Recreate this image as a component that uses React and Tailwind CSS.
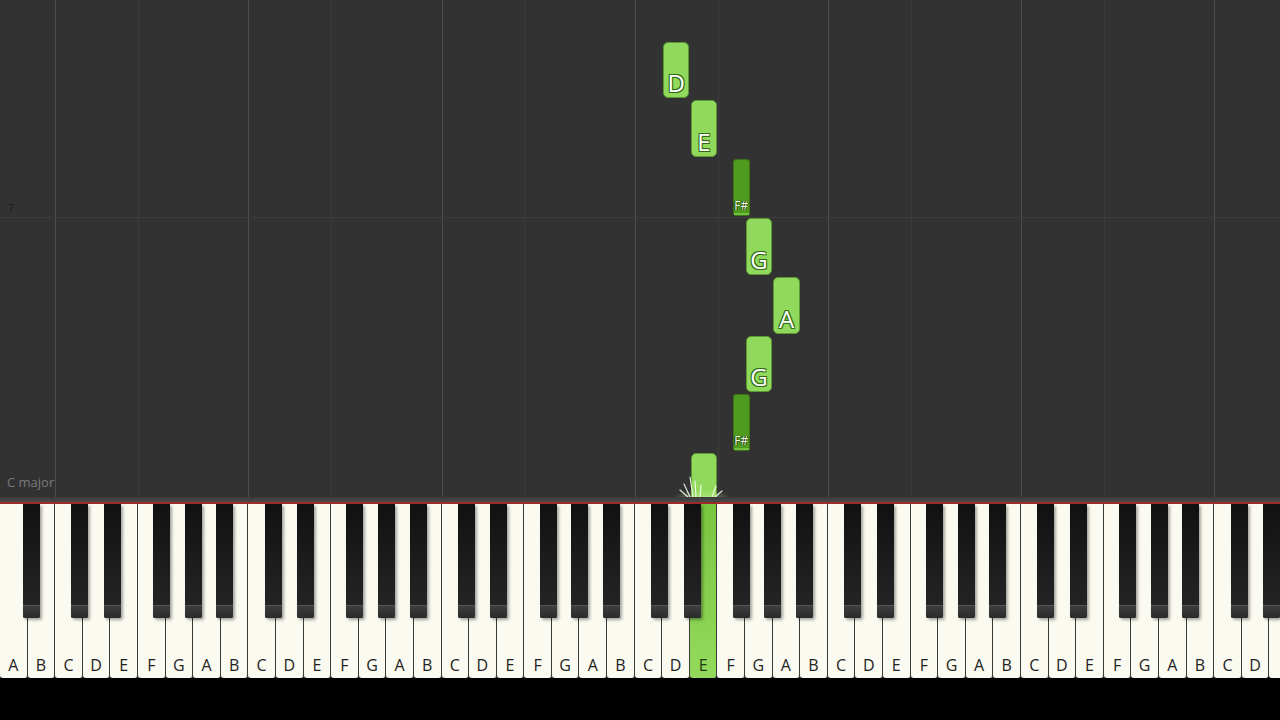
import React from 'react';

const KEY_W = 27.6;
const WHITE_COUNT = 47;
const NAMES = 'ABCDEFG';
const LIT_KEY = 25;

// black key sits after these white keys (index within octave starting on A), shifted a bit like a real keyboard
const BLACK_SHIFT = { 0: 4, 2: -3, 3: 2, 5: -4, 6: 0 };

const notes = [
  { key: 24, top: 42, h: 56, label: 'D' },
  { key: 25, top: 100, h: 57, label: 'E' },
  { key: 26, top: 159, h: 57, label: 'F#', sharp: true },
  { key: 27, top: 218, h: 57, label: 'G' },
  { key: 28, top: 277, h: 57, label: 'A' },
  { key: 27, top: 336, h: 56, label: 'G' },
  { key: 26, top: 394, h: 57, label: 'F#', sharp: true },
  { key: 25, top: 453, h: 48, label: '' },
];

const gridLines = [];
for (let i = 0; i < WHITE_COUNT; i++) {
  const n = i % 7;
  if (n === 2) gridLines.push({ x: i * KEY_W, major: true });
  if (n === 5) gridLines.push({ x: i * KEY_W, major: false });
}

const Note = ({ note }) => {
  if (note.sharp) {
    const center = (note.key + 1) * KEY_W + BLACK_SHIFT[5];
    return (
      <div
        className="absolute flex flex-col justify-end items-center rounded-[3px] border border-[#3d7417] bg-[#4f9b1f]"
        style={{ left: center - 8.5, top: note.top, width: 17, height: note.h }}
      >
        <span className="mb-[1px] text-[12px] leading-none text-[#eef6e6] font-['Open_Sans',sans-serif] [text-shadow:0_0_1px_#1f3d0b,1px_0_0_#1f3d0b,-1px_0_0_#1f3d0b]">
          {note.label}
        </span>
        <div className="h-[2px] w-full bg-[#73c040]" />
      </div>
    );
  }
  return (
    <div
      className="absolute flex items-end justify-center rounded-[5px] border border-[#5a9a30] bg-[#91d95c]"
      style={{ left: note.key * KEY_W + 0.5, top: note.top, width: KEY_W - 1, height: note.h }}
    >
      <span className="mb-[2px] text-[24px] leading-none text-white font-['Open_Sans',sans-serif] [text-shadow:1px_1px_0_#2f6a12,-1px_-1px_0_#2f6a12,1px_-1px_0_#2f6a12,-1px_1px_0_#2f6a12]">
        {note.label}
      </span>
    </div>
  );
};

// little burst where the note meets the keys
const Sparkle = () => (
  <svg className="absolute left-[674px] top-[466px]" width="56" height="32" viewBox="0 0 56 32">
    <defs>
      <radialGradient id="burst" cx="0.5" cy="1" r="0.75">
        <stop offset="0" stopColor="#ffffff" stopOpacity="0.95" />
        <stop offset="0.45" stopColor="#e4fbcc" stopOpacity="0.6" />
        <stop offset="1" stopColor="#b6ec86" stopOpacity="0" />
      </radialGradient>
    </defs>
    <ellipse cx="28" cy="31" rx="28" ry="16" fill="url(#burst)" />
    <g stroke="#f6ffec" strokeWidth="1.2" strokeLinecap="round" opacity="0.9">
      <line x1="16" y1="31" x2="10" y2="18" />
      <line x1="19" y1="31" x2="16" y2="11" />
      <line x1="22" y1="31" x2="21" y2="15" />
      <line x1="14" y1="31" x2="6" y2="24" />
      <line x1="26" y1="31" x2="27" y2="19" />
      <line x1="38" y1="31" x2="42" y2="20" />
      <line x1="41" y1="31" x2="48" y2="25" />
    </g>
  </svg>
);

const Keyboard = () => {
  const whites = [];
  const blacks = [];
  for (let i = 0; i < WHITE_COUNT; i++) {
    const lit = i === LIT_KEY;
    const partial = i === WHITE_COUNT - 1;
    whites.push(
      <div
        key={i}
        className={`flex h-full w-[27.6px] shrink-0 items-end justify-center rounded-b-[3px] border-r border-[#3a3a3a] pb-[5px] ${
          lit ? 'bg-gradient-to-b from-[#79c63f] to-[#93da5c]' : 'bg-[#fbfaf1]'
        }`}
      >
        {!partial && (
          <span className={`text-[16px] leading-none font-['Open_Sans',sans-serif] ${lit ? 'text-[#1f3a10]' : 'text-[#222222]'}`}>
            {NAMES[i % 7]}
          </span>
        )}
      </div>
    );
    const n = i % 7;
    if (n in BLACK_SHIFT) {
      const center = (i + 1) * KEY_W + BLACK_SHIFT[n];
      blacks.push(
        <div
          key={`b${i}`}
          className="absolute top-0 flex h-[114px] w-[17px] flex-col rounded-b-[2px] bg-gradient-to-b from-[#111111] via-[#1c1c1c] to-[#262626] shadow-[2px_2px_3px_rgba(0,0,0,0.35)]"
          style={{ left: center - 8.5 }}
        >
          <div className="flex-1" />
          <div className="h-[1px] w-full bg-[#555555]" />
          <div className="h-[12px] w-full rounded-b-[2px] bg-gradient-to-b from-[#3e3e3e] to-[#2a2a2a]" />
        </div>
      );
    }
  }
  return (
    <div className="relative flex h-[174px] overflow-hidden bg-[#2a2a2a]">
      {whites}
      {blacks}
    </div>
  );
};

export default function App() {
  return (
    <div className="flex h-[720px] w-[1280px] flex-col overflow-hidden bg-black">
      {/* falling notes area */}
      <div className="relative h-[497px] shrink-0 overflow-hidden bg-[#323232]">
        {gridLines.map((g) => (
          <div
            key={g.x}
            className={`absolute top-0 h-full w-[1px] ${g.major ? 'bg-[#4e4e4e]' : 'bg-[#3b3b3b]'}`}
            style={{ left: g.x }}
          />
        ))}
        <div className="absolute left-0 top-[217px] h-[1px] w-full bg-[#3c3c3c]" />
        <span className="absolute left-[8px] top-[203px] text-[10px] leading-none text-[#1c1c1c] font-['Open_Sans',sans-serif]">7</span>

        {notes.map((n, i) => (
          <Note key={i} note={n} />
        ))}
        <Sparkle />

        <span className="absolute left-[7px] top-[476px] text-[13px] leading-none text-[#7a7a7a] font-['Open_Sans',sans-serif]">
          C major
        </span>
      </div>

      <div className="h-[5px] shrink-0 bg-gradient-to-b from-[#3a3a3a] to-[#4a4a4a]" />
      <div className="h-[2px] shrink-0 bg-[#a02a2a]" />
      <Keyboard />
      <div className="flex-1 bg-black" />
    </div>
  );
}
